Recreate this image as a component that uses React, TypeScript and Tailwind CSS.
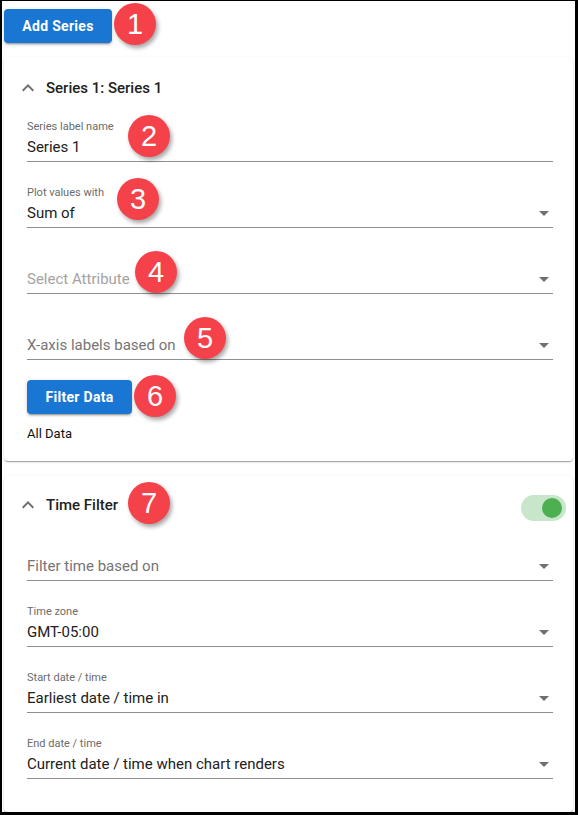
import React from 'react'

const font = { fontFamily: 'Roboto, "Liberation Sans", Arial, sans-serif' }

function ExpandLess() {
  return (
    <svg viewBox="0 0 24 24" className="w-6 h-6 shrink-0" fill="#6f6f6f" aria-hidden>
      <path d="M12 8l-6 6 1.41 1.41L12 10.83l4.59 4.58L18 14z" />
    </svg>
  )
}

function DropArrow() {
  return (
    <svg viewBox="0 0 10 5" className="w-[10px] h-[5px] mr-[4px] shrink-0" fill="#707070" aria-hidden>
      <path d="M0 0l5 5 5-5z" />
    </svg>
  )
}

type FieldProps = {
  label?: string
  value?: string
  placeholder?: string
  faint?: boolean
  select?: boolean
}

function Field({ label, value, placeholder, faint, select = true }: FieldProps) {
  return (
    <div className="flex flex-col">
      <span className="h-[14px] text-[11px] leading-[14px] text-[#6b6b6b]">{label}</span>
      <div className="mt-[3px] flex items-center justify-between border-b border-[#8f8f8f] pb-[4px]">
        {value ? (
          <span className="text-[15px] leading-[20px] text-[#212121]">{value}</span>
        ) : (
          <span
            className={
              faint
                ? 'text-[15px] leading-[20px] text-[#a3a3a3]'
                : 'text-[15px] leading-[20px] text-[#757575]'
            }
          >
            {placeholder}
          </span>
        )}
        {select ? <DropArrow /> : null}
      </div>
    </div>
  )
}

function Badge({ n, className }: { n: number; className: string }) {
  return (
    <div
      className={
        'absolute w-[42px] h-[42px] rounded-full bg-[#f5424a] text-white flex items-center justify-center text-[29px] leading-none shadow-[2px_3px_4px_rgba(0,0,0,0.35)] ' +
        className
      }
      style={{ fontFamily: '"Liberation Sans", Arial, sans-serif' }}
    >
      {n}
    </div>
  )
}

const cardShadow =
  'shadow-[0_2px_1px_-1px_rgba(0,0,0,0.2),0_1px_1px_0_rgba(0,0,0,0.14),0_1px_3px_0_rgba(0,0,0,0.12)]'

const btn =
  'h-[34px] rounded-[4px] bg-[#1976d2] text-white text-[14px] font-bold tracking-[0.3px] shadow-[0_3px_1px_-2px_rgba(0,0,0,0.2),0_2px_2px_0_rgba(0,0,0,0.14),0_1px_5px_0_rgba(0,0,0,0.12)]'

export default function App() {
  return (
    <div
      className="relative w-[578px] h-[815px] overflow-hidden bg-white border-black border-l-2 border-t border-r-[3px] border-b-[3px] flex flex-col"
      style={font}
    >
      <div className="pt-[8px] pl-[2px]">
        <button className={btn + ' w-[108px]'}>Add Series</button>
      </div>

      {/* Series card */}
      <section className={'mt-[14px] ml-[2px] mr-[2px] bg-white rounded-[4px] pt-[7px] pb-[19px] ' + cardShadow}>
        <div className="h-[48px] flex items-center pl-[12px] gap-[6px]">
          <ExpandLess />
          <h3 className="text-[15px] font-medium text-[#212121]">Series 1: Series 1</h3>
        </div>
        <div className="mt-[8px] pl-[23px] pr-[20px] flex flex-col">
          <div className="flex flex-col gap-[24px]">
            <Field label="Series label name" value="Series 1" select={false} />
            <Field label="Plot values with" value="Sum of" />
            <Field placeholder="Select Attribute" faint />
            <Field placeholder="X-axis labels based on" />
          </div>
          <button className={btn + ' mt-[20px] self-start w-[105px]'}>Filter Data</button>
          <p className="mt-[12px] text-[13px] leading-[16px] text-[#111]">All Data</p>
        </div>
      </section>

      {/* Time filter card */}
      <section className={'mt-[15px] ml-[2px] mr-[2px] flex-1 bg-white rounded-[4px] pt-[5px] ' + cardShadow}>
        <div className="h-[48px] flex items-center pl-[12px] pr-[7px] gap-[6px]">
          <ExpandLess />
          <h3 className="flex-1 text-[15px] font-medium text-[#212121]">Time Filter</h3>
          <div className="mt-[6px] w-[45px] h-[26px] rounded-full bg-[#c8e6c9] flex items-center justify-end pr-[4px]">
            <span className="w-[20px] h-[20px] rounded-full bg-[#4caf50]" />
          </div>
        </div>
        <div className="mt-[10px] pl-[23px] pr-[20px] flex flex-col gap-[24px]">
          <Field placeholder="Filter time based on" />
          <Field label="Time zone" value="GMT-05:00" />
          <Field label="Start date / time" value="Earliest date / time in" />
          <Field label="End date / time" value="Current date / time when chart renders" />
        </div>
      </section>

      <Badge n={1} className="left-[112px] top-[2px]" />
      <Badge n={2} className="left-[126px] top-[114px]" />
      <Badge n={3} className="left-[115px] top-[177px]" />
      <Badge n={4} className="left-[133px] top-[250px]" />
      <Badge n={5} className="left-[182px] top-[316px]" />
      <Badge n={6} className="left-[132px] top-[374px]" />
      <Badge n={7} className="left-[126px] top-[481px]" />
    </div>
  )
}
